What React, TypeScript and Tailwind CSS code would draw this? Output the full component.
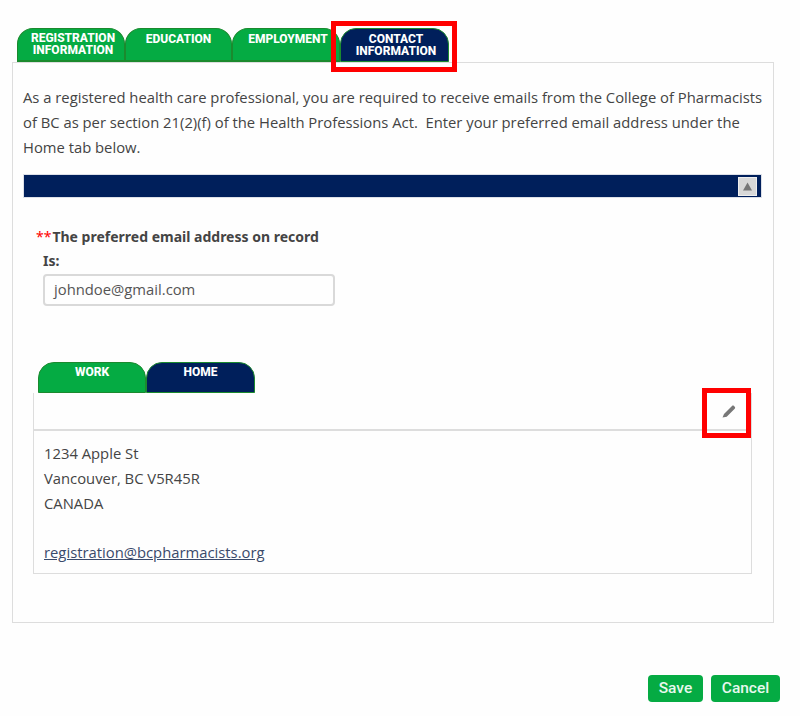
import React from 'react';

const topTabs = [
  { label: 'REGISTRATION INFORMATION', width: 'w-[108px]', top: 'pt-[3px] pl-[4px]' },
  { label: 'EDUCATION', width: 'w-[107px]', top: 'pt-[4px]' },
  { label: 'EMPLOYMENT', width: 'w-[108px]', top: 'pt-[4px] pl-[4px]' },
];

const App: React.FC = () => {
  return (
    <div className="relative w-[800px] h-[716px] overflow-hidden bg-[#fefefe] font-['Open_Sans',sans-serif] text-[#444444]">
      <div className="pt-[28px] pl-[12px]">
        <div className="flex pl-[5px] h-[34px] font-['Roboto',sans-serif] text-[12px] leading-[12px] font-extrabold text-white text-center">
          {topTabs.map(tab => (
            <div key={tab.label} className={`${tab.width} ${tab.top} bg-[#05ab43] border border-b-2 border-[#1b8a2e] rounded-t-[16px]`}>
              <span className="block px-[4px]">{tab.label}</span>
            </div>
          ))}
          <div className="w-[109px] pt-[4px] pl-[3px] bg-[#001f5b] border border-[#1b8a2e] rounded-t-[16px]">
            CONTACT<br />INFORMATION
          </div>
        </div>

        <div className="w-[762px] h-[561px] border border-[#dddddd] pt-[22px] px-[10px]">
          <p className="text-[14.8px] leading-[25px] whitespace-nowrap">
            As a registered health care professional, you are required to receive emails from the College of Pharmacists<br />
            of BC as per section 21(2)(f) of the Health Professions Act.&nbsp; Enter your preferred email address under the<br />
            Home tab below.
          </p>

          <div className="mt-[14px] h-[24px] w-[739px] bg-[#001f5b] border border-[#dde0e8] flex justify-end items-center pr-[4px]">
            <div className="w-[19px] h-[19px] bg-[#d8d8d8] border border-[#eeeeee] flex items-center justify-center">
              <svg width="9" height="9" viewBox="0 0 9 9"><path d="M4.5 0.5L9 8.5H0z" fill="#777777" /></svg>
            </div>
          </div>

          <div className="mt-[29px] pl-[13px] text-[14px] leading-[20px] font-bold font-['Noto_Sans',sans-serif] whitespace-nowrap">
            <span className="text-[#ff0000] font-normal pr-[1px]">**</span>The preferred email address on record
          </div>
          <div className="mt-[4px] pl-[20px] text-[14px] leading-[20px] font-bold font-['Noto_Sans',sans-serif]">Is:</div>
          <div className="ml-[20px] mt-[3px] w-[292px] h-[32px] border-2 border-[#d9d9d9] rounded-[4px] pl-[9px] text-[14.8px] leading-[27px] text-[#555555]">
            johndoe@gmail.com
          </div>

          <div className="mt-[56px] ml-[15px] flex h-[31px] font-['Roboto',sans-serif] text-[12px] font-extrabold text-white text-center">
            <div className="w-[108px] pt-[2px] leading-[14px] bg-[#05ab43] border border-[#1b8a2e] rounded-t-[16px]">WORK</div>
            <div className="w-[109px] pt-[2px] leading-[14px] bg-[#001f5b] border border-[#1b8a2e] rounded-t-[16px]">HOME</div>
          </div>

          <div className="ml-[10px] w-[719px] h-[181px] border border-t-0 border-[#dddddd]">
            <div className="h-[38px] border-b-2 border-[#dddddd] flex justify-end items-center pr-[14px]">
              <svg width="15" height="14" viewBox="0 0 15 14">
                <path d="M0.5 13.5l1.5-3.5 8-8c.6-.6 1.4-.6 2 0l.7.7c.6.6.6 1.4 0 2l-8 8z" fill="#777777" />
              </svg>
            </div>
            <div className="pt-[10px] pl-[10px] text-[14.8px] leading-[25px] text-[#444444]">
              <div>1234 Apple St</div>
              <div>Vancouver, BC V5R45R</div>
              <div>CANADA</div>
              <div className="h-[24px]" />
              <a className="underline text-[#3a4a6b]">registration@bcpharmacists.org</a>
            </div>
          </div>
        </div>

        <div className="mt-[52px] flex justify-end gap-[8px] pr-[20px] font-['Roboto',sans-serif] text-[15.5px] font-medium text-[#e8f8ee]">
          <div className="w-[55px] h-[27px] bg-[#05ab43] rounded-[4px] flex items-center justify-center">Save</div>
          <div className="w-[69px] h-[27px] bg-[#05ab43] rounded-[4px] flex items-center justify-center">Cancel</div>
        </div>
      </div>

      {/* red callouts drawn over the capture */}
      <div className="absolute left-[331px] top-[21px] w-[126px] h-[51px] border-[5px] border-[#ff0000]" />
      <div className="absolute left-[702px] top-[388px] w-[49px] h-[50px] border-[5px] border-[#ff0000]" />
    </div>
  );
};

export default App;
